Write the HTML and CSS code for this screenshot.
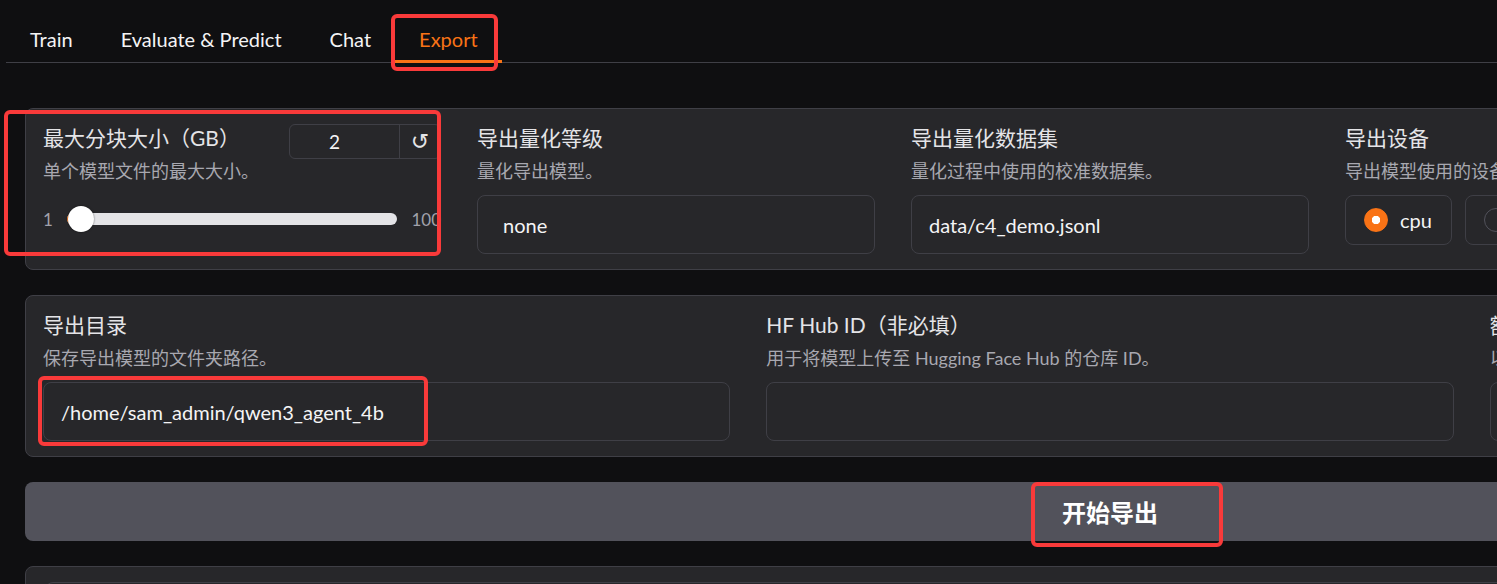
FILE: index.html
```html
<!DOCTYPE html>
<html lang="zh-CN">

<head>
    <meta charset="UTF-8">
    <title>LLaMA Board - Export</title>
    <link rel="stylesheet" href="styles.css">
</head>

<body>
    <div class="app">
        <div class="tabs">
            <button class="tab">Train</button>
            <button class="tab">Evaluate &amp; Predict</button>
            <button class="tab">Chat</button>
            <button class="tab selected">Export</button>
        </div>

        <div class="tab-panel">
            <!-- 第一行：分块大小 / 量化 / 设备 -->
            <div class="block row5">
                <div class="field">
                    <div class="slider-head">
                        <span class="label">最大分块大小（GB）</span>
                        <div class="num-box">
                            <span class="num">2</span>
                            <span class="reset">↺</span>
                        </div>
                    </div>
                    <div class="info">单个模型文件的最大大小。</div>
                    <div class="slider-row">
                        <span class="lim">1</span>
                        <div class="track">
                            <div class="fill"></div>
                            <div class="thumb"></div>
                        </div>
                        <span class="lim">100</span>
                    </div>
                </div>
                <div class="field">
                    <span class="label">导出量化等级</span>
                    <div class="info">量化导出模型。</div>
                    <div class="text-box dropdown">none</div>
                </div>
                <div class="field">
                    <span class="label">导出量化数据集</span>
                    <div class="info">量化过程中使用的校准数据集。</div>
                    <div class="text-box">data/c4_demo.jsonl</div>
                </div>
                <div class="field">
                    <span class="label">导出设备</span>
                    <div class="info">导出模型使用的设备类型。</div>
                    <div class="radio-group">
                        <div class="radio checked"><span class="dot"></span>cpu</div>
                        <div class="radio"><span class="dot"></span>auto</div>
                    </div>
                </div>
                <div class="field">
                    <span class="label">导出旧格式</span>
                    <div class="info">是否使用旧格式导出模型。</div>
                    <div class="radio-group">
                        <div class="radio"><span class="check"></span>导出旧格式</div>
                    </div>
                </div>
            </div>

            <!-- 第二行：目录 / Hub / 额外参数 -->
            <div class="block row3">
                <div class="field">
                    <span class="label">导出目录</span>
                    <div class="info">保存导出模型的文件夹路径。</div>
                    <div class="text-box">/home/sam_admin/qwen3_agent_4b</div>
                </div>
                <div class="field">
                    <span class="label">HF Hub ID（非必填）</span>
                    <div class="info">用于将模型上传至 Hugging Face Hub 的仓库 ID。</div>
                    <div class="text-box"></div>
                </div>
                <div class="field">
                    <span class="label">额外参数（非必填）</span>
                    <div class="info">以 JSON 格式传递给导出器的额外参数。</div>
                    <div class="text-box">{}</div>
                </div>
            </div>

            <button class="export-btn">开始导出</button>

            <div class="block bottom">
                <div class="out-box"></div>
            </div>
        </div>
    </div>

    <!-- 截图上的红色标注框 -->
    <div class="mark mark-tab"></div>
    <div class="mark mark-size"></div>
    <div class="mark mark-dir"></div>
    <div class="mark mark-btn"></div>
</body>

</html>
```

FILE: styles.css
```css
html,
body {
    margin: 0;
    padding: 0;
    overflow: hidden;
}

body {
    position: relative;
    background-color: #0f0f11;
    color: #e4e4e7;
    font-family: Lato, "Noto Sans CJK SC", sans-serif;
}

.app {
    width: 2208px;
    margin-left: 6px;
}

/* tabs */
.tabs {
    display: flex;
    padding-top: 18px;
    border-bottom: 1px solid #3f3f46;
}

.tab {
    height: 45px;
    margin-bottom: -1px;
    padding: 0 24px;
    border: 0;
    border-bottom: 3px solid transparent;
    background: none;
    color: #f4f4f5;
    font: 20px/42px Lato, "Noto Sans CJK SC", sans-serif;
}

.tab.selected {
    color: #f97316;
    border-bottom-color: #f97316;
}

.tab-panel {
    display: flex;
    flex-direction: column;
    gap: 25px;
    padding: 45px 19px 0;
}

/* blocks */
.block {
    background-color: #27272a;
    border: 1px solid #3f3f46;
    border-radius: 8px;
    padding: 15px 17px;
}

.row5 {
    display: grid;
    grid-template-columns: repeat(5, 1fr);
    gap: 36px;
}

.row3 {
    display: grid;
    grid-template-columns: repeat(3, 1fr);
    gap: 36px;
}

.field {
    min-width: 0;
}

.label {
    display: block;
    font-size: 21px;
    line-height: 28px;
    color: #e4e4e7;
    white-space: nowrap;
}

.info {
    margin-top: 7px;
    font-size: 18px;
    line-height: 24px;
    color: #a8a8b0;
    white-space: nowrap;
}

.text-box {
    box-sizing: border-box;
    height: 59px;
    margin-top: 12px;
    padding: 0 17px;
    display: flex;
    align-items: center;
    border: 1px solid #3f3f46;
    border-radius: 8px;
    font-size: 20px;
    color: #f4f4f5;
}

.dropdown {
    padding-left: 25px;
}

/* slider */
.slider-head {
    display: flex;
    justify-content: space-between;
    align-items: flex-start;
    height: 28px;
}

.num-box {
    display: flex;
    box-sizing: border-box;
    width: 152px;
    height: 35px;
    border: 1px solid #3f3f46;
    border-radius: 6px;
}

.num {
    flex: 1;
    padding-right: 20px;
    text-align: center;
    font-size: 19px;
    line-height: 33px;
    color: #f4f4f5;
}

.reset {
    width: 40px;
    border-left: 1px solid #3f3f46;
    text-align: center;
    font: 22px/33px "DejaVu Sans", sans-serif;
    color: #e4e4e7;
}

.slider-row {
    display: flex;
    align-items: center;
    gap: 14px;
    height: 26px;
    margin-top: 23px;
    font-size: 17px;
    color: #a1a1aa;
}

.track {
    position: relative;
    flex: 1;
    height: 12px;
    border-radius: 6px;
    background-color: #e4e4e7;
}

.fill {
    width: 14px;
    height: 12px;
    border-radius: 6px 0 0 6px;
    background-color: #f97316;
}

.thumb {
    position: absolute;
    left: 1px;
    top: -7px;
    width: 26px;
    height: 26px;
    border-radius: 50%;
    background-color: #fff;
    box-shadow: 0 0 2px rgba(0, 0, 0, 0.6);
}

/* radio */
.radio-group {
    display: flex;
    gap: 13px;
    margin-top: 12px;
}

.radio {
    box-sizing: border-box;
    height: 50px;
    padding: 0 19px 0 18px;
    display: flex;
    align-items: center;
    gap: 12px;
    border: 1px solid #3f3f46;
    border-radius: 8px;
    font-size: 20px;
    color: #f4f4f5;
    white-space: nowrap;
}

.dot {
    box-sizing: border-box;
    width: 24px;
    height: 24px;
    border-radius: 50%;
    border: 1px solid #52525b;
    background-color: #27272a;
}

.radio.checked .dot {
    border-color: #f97316;
    background: radial-gradient(circle, #fff 0 4px, #f97316 4.5px);
}

.check {
    box-sizing: border-box;
    width: 22px;
    height: 22px;
    border-radius: 4px;
    border: 1px solid #52525b;
}

/* button */
.export-btn {
    height: 59px;
    border: 0;
    border-radius: 8px;
    background-color: #52525b;
    color: #fff;
    font: bold 24px "Noto Sans CJK SC", sans-serif;
}

.bottom {
    padding: 15px 19px;
}

.out-box {
    height: 120px;
    border: 1px solid #3f3f46;
    border-radius: 8px;
}

/* red annotations */
.mark {
    position: absolute;
    box-sizing: border-box;
    border: 4px solid #f93a3a;
    border-radius: 6px;
}

.mark-tab {
    left: 391px;
    top: 14px;
    width: 107px;
    height: 57px;
}

.mark-size {
    left: 4px;
    top: 110px;
    width: 437px;
    height: 146px;
}

.mark-dir {
    left: 38px;
    top: 376px;
    width: 390px;
    height: 70px;
}

.mark-btn {
    left: 1031px;
    top: 482px;
    width: 192px;
    height: 65px;
}
```
